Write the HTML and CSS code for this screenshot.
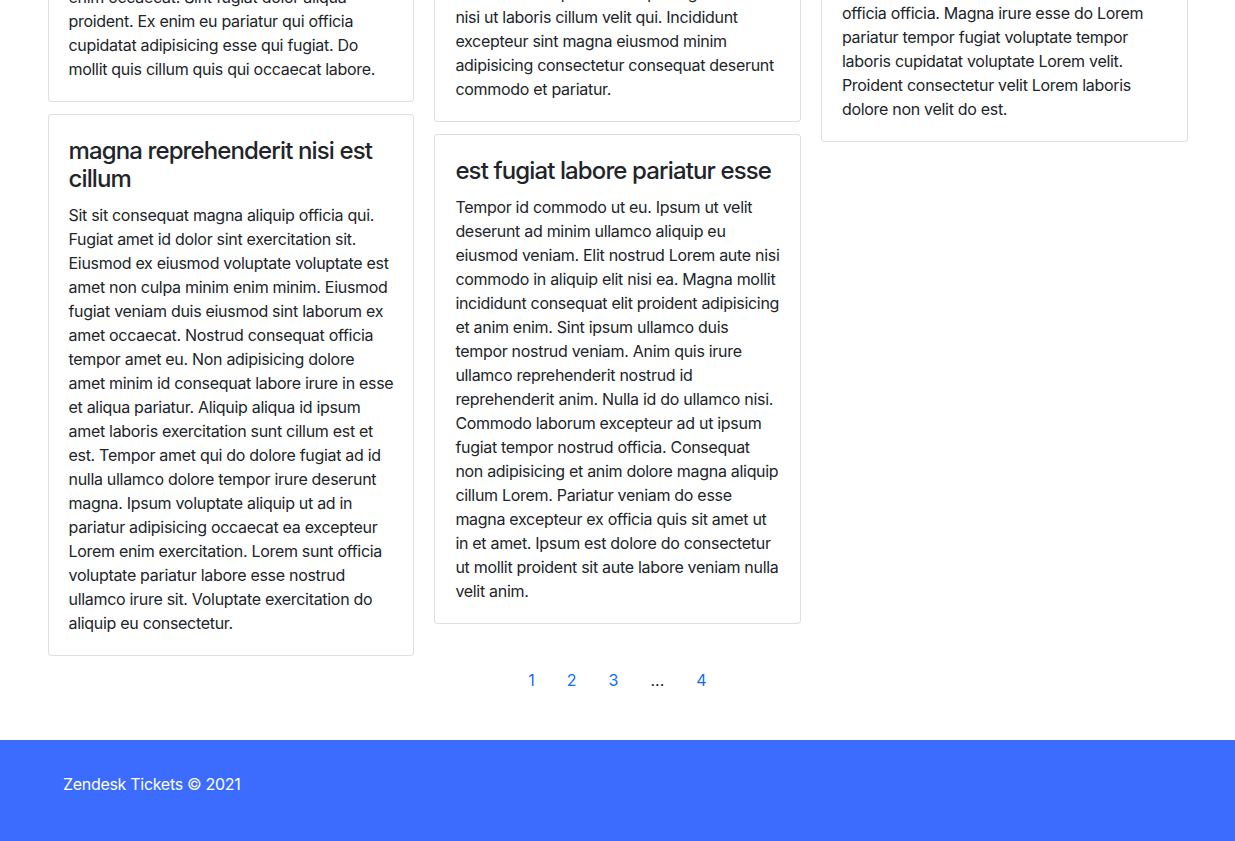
FILE: index.html
```html
<!DOCTYPE html>
<html lang="en">
<head>
<meta charset="utf-8">
<title>Zendesk Tickets</title>
<link rel="stylesheet" href="styles.css">
</head>
<body>
<main class="page">
  <div class="tickets">
    <div class="column">
      <article class="card">
        <h4 class="card-title">cupidatat nostrud<br>ullamco incididunt<br>aliqua consectetur</h4>
        <p class="card-text">Ipsum dolore aute laborum sunt ut nulla elit<br>enim occaecat. Sint fugiat dolor aliqua<br>proident. Ex enim eu pariatur qui officia<br>cupidatat adipisicing esse qui fugiat. Do<br>mollit quis cillum quis qui occaecat labore.</p>
      </article>
      <article class="card">
        <h4 class="card-title">magna reprehenderit nisi est<br>cillum</h4>
        <p class="card-text">Sit sit consequat magna aliquip officia qui.<br>Fugiat amet id dolor sint exercitation sit.<br>Eiusmod ex eiusmod voluptate voluptate est<br>amet non culpa minim enim minim. Eiusmod<br>fugiat veniam duis eiusmod sint laborum ex<br>amet occaecat. Nostrud consequat officia<br>tempor amet eu. Non adipisicing dolore<br>amet minim id consequat labore irure in esse<br>et aliqua pariatur. Aliquip aliqua id ipsum<br>amet laboris exercitation sunt cillum est et<br>est. Tempor amet qui do dolore fugiat ad id<br>nulla ullamco dolore tempor irure deserunt<br>magna. Ipsum voluptate aliquip ut ad in<br>pariatur adipisicing occaecat ea excepteur<br>Lorem enim exercitation. Lorem sunt officia<br>voluptate pariatur labore esse nostrud<br>ullamco irure sit. Voluptate exercitation do<br>aliquip eu consectetur.</p>
      </article>
    </div>
    <div class="column">
      <article class="card">
        <h4 class="card-title">sunt laborum voluptate<br>enim aliquip</h4>
        <p class="card-text">Excepteur ullamco cillum irure mollit aute<br>duis. Dolor occaecat sint elit anim ipsum<br>labore. Officia proident aliqua fugiat enim<br>nisi ut laboris cillum velit qui. Incididunt<br>excepteur sint magna eiusmod minim<br>adipisicing consectetur consequat deserunt<br>commodo et pariatur.</p>
      </article>
      <article class="card">
        <h4 class="card-title">est fugiat labore pariatur esse</h4>
        <p class="card-text">Tempor id commodo ut eu. Ipsum ut velit<br>deserunt ad minim ullamco aliquip eu<br>eiusmod veniam. Elit nostrud Lorem aute nisi<br>commodo in aliquip elit nisi ea. Magna mollit<br>incididunt consequat elit proident adipisicing<br>et anim enim. Sint ipsum ullamco duis<br>tempor nostrud veniam. Anim quis irure<br>ullamco reprehenderit nostrud id<br>reprehenderit anim. Nulla id do ullamco nisi.<br>Commodo laborum excepteur ad ut ipsum<br>fugiat tempor nostrud officia. Consequat<br>non adipisicing et anim dolore magna aliquip<br>cillum Lorem. Pariatur veniam do esse<br>magna excepteur ex officia quis sit amet ut<br>in et amet. Ipsum est dolore do consectetur<br>ut mollit proident sit aute labore veniam nulla<br>velit anim.</p>
      </article>
    </div>
    <div class="column">
      <article class="card">
        <h4 class="card-title">velit eiusmod dolor irure</h4>
        <p class="card-text">Nostrud labore amet qui deserunt esse ex.<br>Lorem ad eiusmod tempor dolore culpa<br>nulla exercitation. Amet in est ullamco<br>veniam laborum et anim sint. Cillum aute<br>officia officia. Magna irure esse do Lorem<br>pariatur tempor fugiat voluptate tempor<br>laboris cupidatat voluptate Lorem velit.<br>Proident consectetur velit Lorem laboris<br>dolore non velit do est.</p>
      </article>
    </div>
  </div>
  <nav class="pagination" aria-label="Ticket pages">
    <a class="page-link" href="#">1</a>
    <a class="page-link" href="#">2</a>
    <a class="page-link" href="#">3</a>
    <span class="page-break">...</span>
    <a class="page-link" href="#">4</a>
  </nav>
</main>
<footer class="footer">
  <p class="footer-text">Zendesk Tickets © 2021</p>
</footer>
</body>
</html>
```
FILE: styles.css
```css
* { box-sizing: border-box; }

html, body {
  margin: 0;
  padding: 0;
}

body {
  font-family: Inter, "Noto Sans", "Liberation Sans", sans-serif;
  font-size: 16px;
  line-height: 24px;
  letter-spacing: -0.3px;
  color: #212529;
  background: #fff;
}

.page {
  width: 1140px;
  margin: -156px auto 0;
}

.tickets {
  display: grid;
  grid-template-columns: repeat(3, 1fr);
  column-gap: 20px;
  align-items: start;
}

.column {
  display: flex;
  flex-direction: column;
  gap: 12px;
}

.card {
  border: 1px solid rgba(0, 0, 0, 0.125);
  border-radius: 4px;
  padding: 20px;
  background: #fff;
}

.card-title {
  margin: 0 0 10px;
  padding-top: 2px;
  font-size: 24px;
  line-height: 28px;
  font-weight: 500;
  letter-spacing: -0.88px;
  white-space: nowrap;
}

.card-text {
  margin: 0;
  white-space: nowrap;
}

.pagination {
  display: flex;
  justify-content: center;
  margin: 12px 0 48px;
}

.page-link,
.page-break {
  padding: 0 16px;
  line-height: 24px;
  letter-spacing: 0;
}

.page-link {
  color: #0d6efd;
  text-decoration: none;
}

.page-break {
  color: #212529;
}

.footer {
  background: #3b6cfd;
  color: #fff;
  padding: 32px 63px 48px;
}

.footer-text {
  margin: 0;
}
```
